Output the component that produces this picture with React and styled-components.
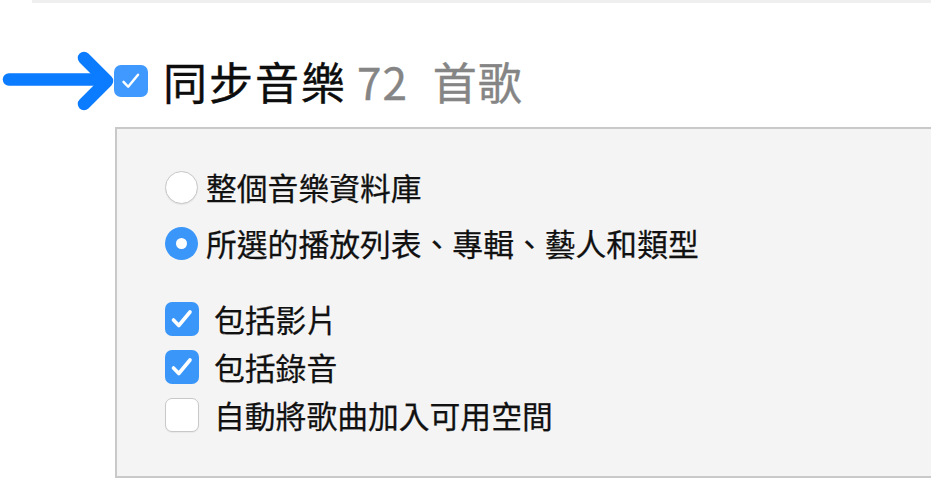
import React from "react";
import styled, { createGlobalStyle } from "styled-components";

const Global = createGlobalStyle`
  html, body {
    margin: 0;
    padding: 0;
    background: #ffffff;
    overflow: hidden;
  }
  body {
    font-family: "Noto Sans CJK TC", "Noto Sans", sans-serif;
    color: #111111;
  }
`;

const Page = styled.div`
  width: 931px;
  height: 500px;
  display: flex;
  flex-direction: column;
`;

const TopRule = styled.div`
  margin-left: 32px;
  height: 3px;
  background: #efefef;
`;

const Header = styled.div`
  display: flex;
  align-items: center;
  height: 60px;
  margin-top: 48px;
`;

const Pointer = styled.svg`
  width: 114px;
  height: 60px;
  flex: none;
`;

const Title = styled.h2`
  margin: 0 0 0 15px;
  font-size: 44px;
  font-weight: 400;
  letter-spacing: 2px;
  line-height: 1;
  color: #0d0d0d;
  -webkit-text-stroke: 0.4px #0d0d0d;
  display: flex;
  align-items: baseline;
  gap: 10px;
`;

const Count = styled.span`
  color: #858585;
  -webkit-text-stroke: 0.4px #858585;
  font-weight: 400;
  letter-spacing: 1px;
  word-spacing: 14px;
`;

const Panel = styled.section`
  margin-top: 16px;
  margin-left: 115px;
  background: #f4f4f4;
  border: 2px solid #c9c9c9;
  border-right: none;
  padding: 41px 0 44px 48px;
  display: flex;
  flex-direction: column;
`;

const Group = styled.div`
  display: flex;
  flex-direction: column;
  gap: ${(p) => p.$gap}px;
  & + & {
    margin-top: 42px;
  }
`;

const Row = styled.label`
  display: flex;
  align-items: center;
  gap: ${(p) => p.$gap}px;
  height: 34px;
  font-size: 30.8px;
  line-height: 1;
  color: #111111;
  -webkit-text-stroke: 0.25px #111111;
`;

const Radio = styled.span`
  width: 33px;
  height: 33px;
  box-sizing: border-box;
  border-radius: 50%;
  flex: none;
  display: flex;
  align-items: center;
  justify-content: center;
  background: ${(p) => (p.$on ? "#3a96f8" : "#ffffff")};
  border: ${(p) => (p.$on ? "none" : "1.5px solid #c6c6c6")};
  box-shadow: ${(p) => (p.$on ? "none" : "0 1px 1px rgba(0,0,0,0.06)")};
  &::after {
    content: "";
    display: ${(p) => (p.$on ? "block" : "none")};
    width: 11px;
    height: 11px;
    border-radius: 50%;
    background: #ffffff;
  }
`;

const Box = styled.span`
  width: ${(p) => p.$w || 34}px;
  height: ${(p) => p.$h || 34}px;
  box-sizing: border-box;
  border-radius: 7px;
  flex: none;
  display: flex;
  align-items: center;
  justify-content: center;
  background: ${(p) => (p.$on ? p.$tint || "#3a96f8" : "#ffffff")};
  border: ${(p) => (p.$on ? "none" : "1.5px solid #c8c8c8")};
  box-shadow: ${(p) => (p.$on ? "none" : "0 1px 1px rgba(0,0,0,0.05)")};
`;

const Tick = ({ w = 3.6, size = 34 }) => (
  <svg width={size} height={size} viewBox="0 0 34 34">
    <path
      d="M8.5 18 L13.8 23.5 L25 10"
      fill="none"
      stroke="#ffffff"
      strokeWidth={w}
      strokeLinecap="round"
      strokeLinejoin="round"
    />
  </svg>
);

const Check = ({ on, w, h, tint, stroke, tickSize }) => (
  <Box $on={on} $w={w} $h={h} $tint={tint}>
    {on && <Tick w={stroke} size={tickSize} />}
  </Box>
);

export default function App() {
  return (
    <Page>
      <Global />
      <TopRule />
      <Header>
        <Pointer viewBox="0 0 114 60">
          <g
            fill="none"
            stroke="#0b7bff"
            strokeWidth="12.5"
            strokeLinecap="round"
            strokeLinejoin="round"
          >
            <path d="M9 28.5 H104" />
            <path d="M84 7 L107 30 L84 53" />
          </g>
        </Pointer>
        <Check on w={34} h={32} tint="#3f99ff" stroke={2.8} tickSize={30} />
        <Title>
          同步音樂<Count>72 首歌</Count>
        </Title>
      </Header>
      <Panel>
        <Group $gap={22}>
          <Row $gap={8}>
            <Radio />
            整個音樂資料庫
          </Row>
          <Row $gap={8}>
            <Radio $on />
            所選的播放列表、專輯、藝人和類型
          </Row>
        </Group>
        <Group $gap={14}>
          <Row $gap={15}>
            <Check on />
            包括影片
          </Row>
          <Row $gap={15}>
            <Check on />
            包括錄音
          </Row>
          <Row $gap={15}>
            <Check />
            自動將歌曲加入可用空間
          </Row>
        </Group>
      </Panel>
    </Page>
  );
}
